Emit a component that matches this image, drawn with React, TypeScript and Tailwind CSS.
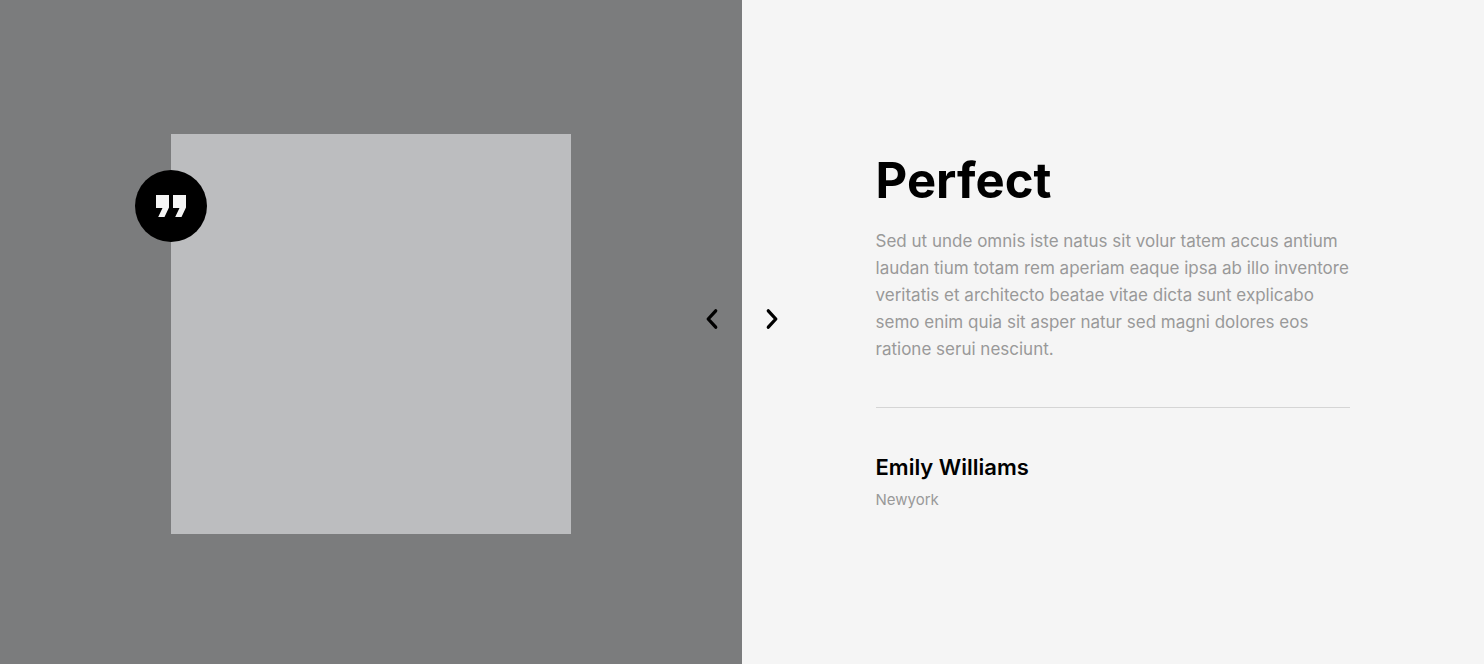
export default function App() {
  return (
    <main className="relative grid min-h-screen grid-cols-2 font-[Inter,'Open_Sans',sans-serif]">
      <section className="flex items-center justify-center bg-[#7b7c7d]">
        <div className="relative mt-1 size-[400px] bg-[#bcbdbf]">
          <span className="absolute -left-9 top-9 flex size-[72px] items-center justify-center rounded-full bg-black text-[#f5f5f5]">
            <svg viewBox="0 0 32 24" className="h-6 w-8" fill="currentColor" aria-hidden="true">
              <path d="M1 1h13v12.5L9.5 23H3.2L7.5 14H1zM18 1h13v12.5L26.5 23h-6.3l4.3-9H18z" />
            </svg>
          </span>
        </div>
      </section>
      <section className="flex flex-col justify-center bg-[#f5f5f5] px-[18%] pt-1">
        <h2 className="text-[49px] font-bold leading-[58px] text-black">Perfect</h2>
        <p className="mt-[18px] text-[17px] leading-[27px] text-[#999]">
          Sed ut unde omnis iste natus sit volur tatem accus antium laudan tium totam rem aperiam eaque ipsa ab illo inventore veritatis et architecto beatae vitae dicta sunt explicabo semo enim quia sit asper natur sed magni dolores eos ratione serui nesciunt.
        </p>
        <hr className="my-11 border-[#d5d5d5]" />
        <h3 className="text-[22px] font-semibold leading-[30px] text-black">Emily Williams</h3>
        <p className="mt-0.5 text-[15px] leading-8 text-[#999]">Newyork</p>
      </section>
      <nav aria-label="Testimonials" className="absolute bottom-1/2 left-1/2 flex -translate-x-1/2 gap-9 text-black">
        <button type="button" aria-label="Previous" className="cursor-pointer">
          <svg viewBox="0 0 24 26" className="h-[26px] w-6" fill="none" stroke="currentColor" strokeWidth="3.3" strokeLinecap="round" strokeLinejoin="round" aria-hidden="true">
            <path d="M15.7 4.8L8.2 13l7.5 8.2" />
          </svg>
        </button>
        <button type="button" aria-label="Next" className="cursor-pointer">
          <svg viewBox="0 0 24 26" className="h-[26px] w-6" fill="none" stroke="currentColor" strokeWidth="3.3" strokeLinecap="round" strokeLinejoin="round" aria-hidden="true">
            <path d="M8.3 4.8l7.5 8.2-7.5 8.2" />
          </svg>
        </button>
      </nav>
    </main>
  );
}
